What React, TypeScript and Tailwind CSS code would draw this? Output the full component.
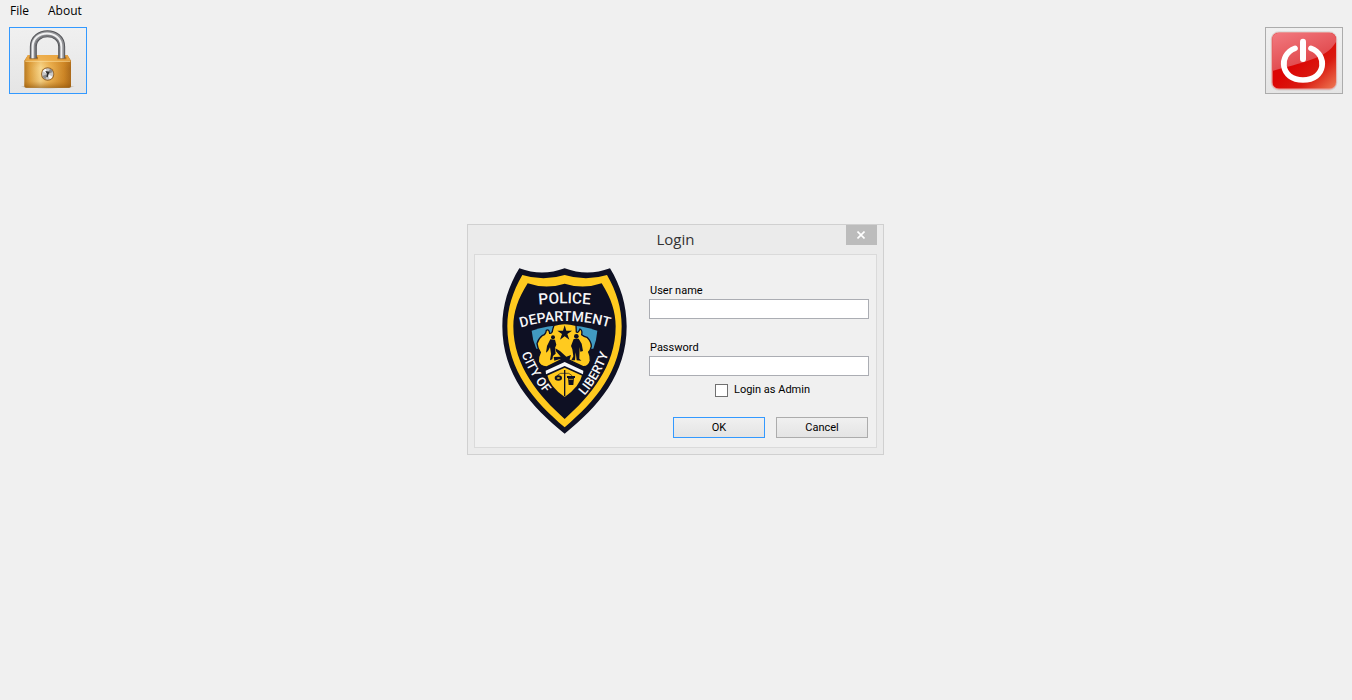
import React, { useState } from "react";

const PadlockIcon = () => (
  <svg viewBox="30 84 228 195" className="w-full h-full" aria-hidden="true">
    <defs>
      <linearGradient id="lockBody" x1="0" x2="1">
        <stop offset="0" stopColor="#b87a22" />
        <stop offset="0.12" stopColor="#dda03f" />
        <stop offset="0.35" stopColor="#f8d78c" />
        <stop offset="0.55" stopColor="#edb353" />
        <stop offset="0.85" stopColor="#cc8526" />
        <stop offset="1" stopColor="#a9681a" />
      </linearGradient>
      <linearGradient id="lockShade" x1="0" x2="0" y1="0" y2="1">
        <stop offset="0" stopColor="#d07a14" stopOpacity="0.5" />
        <stop offset="0.4" stopColor="#e0982c" stopOpacity="0" />
        <stop offset="0.8" stopColor="#b06c12" stopOpacity="0.1" />
        <stop offset="1" stopColor="#8a5008" stopOpacity="0.6" />
      </linearGradient>
      <radialGradient id="lockFloor">
        <stop offset="0.6" stopColor="#6b5a40" stopOpacity="0.8" />
        <stop offset="1" stopColor="#6b5a40" stopOpacity="0" />
      </radialGradient>
    </defs>
    <ellipse cx="143" cy="260" rx="82" ry="6" fill="url(#lockFloor)" />
    <path d="M84 165H202L213 182V258Q213 263 207 263H79Q73 263 73 258V182Z" fill="url(#lockBody)" />
    <path d="M84 165H202L213 182V258Q213 263 207 263H79Q73 263 73 258V182Z" fill="url(#lockShade)" />
    <path d="M84 165H202L212 182H74Z" fill="#efaf4c" opacity="0.75" />
    <path d="M76 184H211" stroke="#ffe2a1" strokeWidth="3" opacity="0.7" />
    <path d="M88 170H114V178H88ZM172 170H199V178H172Z" fill="#9c5c12" opacity="0.7" />
    <path d="M100 175V140C100 88 185 88 185 140V175" fill="none" stroke="#55565a" strokeWidth="21" />
    <path d="M100 175V140C100 88 185 88 185 140V175" fill="none" stroke="#929396" strokeWidth="15" />
    <path d="M98 175V140C98 87 184 87 184 140V175" fill="none" stroke="#f1f1f2" strokeWidth="6" />
    <path d="M106 175V141C106 96 179 96 179 141V175" fill="none" stroke="#6d6e72" strokeWidth="3" />
    <circle cx="143" cy="222" r="20" fill="#99672a" />
    <circle cx="143" cy="222" r="17" fill="#c8c8c8" />
    <path d="M143 222L128 214A17 17 0 0 1 137 206ZM143 222L158 230A17 17 0 0 1 149 238Z" fill="#f9f9f9" />
    <path d="M143 222L127 228A17 17 0 0 0 136 238ZM143 222L159 216A17 17 0 0 0 150 206Z" fill="#8c8c8c" />
    <path d="M136 213L149 215L146 222L143 232L139 231L141 222Z" fill="#2d2d2d" />
  </svg>
);

const PowerIcon = () => (
  <svg viewBox="42 24 228 195" className="w-full h-full" aria-hidden="true">
    <defs>
      <linearGradient id="powerBase" x1="0" y1="0" x2="1" y2="1">
        <stop offset="0.45" stopColor="#dc0404" />
        <stop offset="0.7" stopColor="#d91a10" />
        <stop offset="1" stopColor="#ee7a55" />
      </linearGradient>
      <linearGradient id="powerGloss" x1="0" y1="0" x2="0.6" y2="1">
        <stop offset="0" stopColor="#f27a80" />
        <stop offset="1" stopColor="#dd3f42" />
      </linearGradient>
      <clipPath id="powerClip">
        <rect x="61" y="38" width="191" height="168" rx="20" />
      </clipPath>
    </defs>
    <rect x="56" y="34" width="200" height="178" rx="24" fill="#cfcaca" opacity="0.6" />
    <rect x="58" y="36" width="196" height="173" rx="22" fill="#e9a5a2" />
    <g clipPath="url(#powerClip)">
      <rect x="61" y="38" width="191" height="168" fill="url(#powerBase)" />
      <path d="M61 38H252V66C222 118 145 128 61 153Z" fill="url(#powerGloss)" />
    </g>
    <path d="M129 85C78 104 84 180 153 180C222 180 228 104 177 85" fill="none" stroke="#fff" strokeWidth="17" strokeLinecap="round" />
    <path d="M153 65V117" stroke="#fff" strokeWidth="18" strokeLinecap="round" />
  </svg>
);

const PoliceBadge = () => (
  <svg viewBox="126 150 375 498" className="w-[125px] h-[166px] shrink-0" role="img" aria-label="Police badge">
    <defs>
      <path id="arcPolice" d="M215 262Q314 250 413 262" />
      <path id="arcDepartment" d="M168 333Q314 285 462 333" />
      <path id="arcCity" d="M176 376Q196 465 281 558" />
      <path id="arcLiberty" d="M352 555Q422 490 455 378" />
    </defs>
    <path
      d="M178 151Q246 176 314 151Q382 176 450 151C482 203 500 262 500 325C500 470 415 566 314 647C213 566 127 470 127 325C127 262 146 203 178 151Z"
      fill="#0e1023"
    />
    <path
      d="M187 171Q250 191 314 171Q378 191 441 171C470 222 485 270 485 325C485 459 405 551 314 628C223 551 142 459 142 325C142 270 158 222 187 171Z"
      fill="#ffca1f"
    />
    <path
      d="M203 196Q258 215 314 197Q370 215 425 196C454 242 467 282 467 325C467 445 390 535 314 603C238 535 160 445 160 325C160 282 174 242 203 196Z"
      fill="#0e1023"
    />
    <path d="M215 338Q314 306 412 338Q410 366 400 392H229Q217 366 215 338Z" fill="#419ac1" />
    <path
      d="M282 322Q314 312 348 322L349 342Q354 346 360 333Q368 337 365 350Q372 356 381 358Q394 371 394 385Q391 397 386 402Q392 414 391 428Q387 447 369 446L314 420L259 447Q239 445 235 430Q234 416 241 403Q232 389 231 377Q235 362 248 352Q257 350 259 337Q267 332 269 346Q277 347 278 335Z"
      fill="#ffca1f"
      stroke="#0e1023"
      strokeWidth="4"
    />
    <path d="M314 322L319 338H336L322 348L328 365L314 355L300 365L306 348L292 338H309Z" fill="#0e1023" />
    {/* two figures and the scene between them */}
    <g fill="#0e1023">
      <circle cx="279" cy="358" r="6" />
      <path d="M271 364L285 365L289 380L285 390L287 407L279 414L277 424L270 427L273 407L270 388L264 399L258 404L261 384Z" />
      <circle cx="349" cy="355" r="7" />
      <path d="M341 363L356 362L365 377L369 399L361 401L359 387L358 422L364 428L350 427L347 403L345 427H334L340 415L337 394L333 384Z" />
      <path d="M286 391L300 399L319 416L333 411L328 427L298 424L283 428L281 417L302 416L288 400Z" />
    </g>
    <path d="M260 466L314 440L368 466Q360 506 314 537Q268 506 260 466Z" fill="#ffca1f" />
    <path d="M252 459L314 428L376 459L370 475L314 449L258 475Z" fill="#0e1023" />
    <path d="M257 458L314 432L370 458L369 469L314 444L258 469Z" fill="#f7f7f8" />
    <path d="M314 456V535" stroke="#0e1023" strokeWidth="4" />
    <path d="M293 471L302 466H326L335 472M293 471V478M335 472V479" fill="none" stroke="#0e1023" strokeWidth="2" />
    <ellipse cx="295" cy="480" rx="8" ry="5" fill="none" stroke="#0e1023" strokeWidth="6" />
    <path d="M321 474H345V480H342L340 501H326L324 480H321Z" fill="#0e1023" />
    <path d="M326 484H340" stroke="#ffca1f" strokeWidth="2" />
    <g fill="#f7f7f8" textAnchor="middle" className="font-['Roboto',sans-serif] font-medium">
      <text fontSize="46">
        <textPath href="#arcPolice" startOffset="50%">POLICE</textPath>
      </text>
      <text fontSize="42">
        <textPath href="#arcDepartment" startOffset="50%">DEPARTMENT</textPath>
      </text>
      <text fontSize="38">
        <textPath href="#arcCity" startOffset="48%">CITY OF</textPath>
      </text>
      <text fontSize="38">
        <textPath href="#arcLiberty" startOffset="50%">LIBERTY</textPath>
      </text>
    </g>
  </svg>
);

const LoginDialog = () => {
  const [userName, setUserName] = useState("");
  const [password, setPassword] = useState("");
  const [isAdmin, setIsAdmin] = useState(false);

  const field = "block w-55 h-5 px-1 bg-white border border-[#abadb3] outline-none";
  const button = "w-23 h-[21px] pt-px border bg-linear-to-b from-[#f0f0f0] to-[#e4e4e4]";

  return (
    <div role="dialog" aria-labelledby="login-title" className="px-[6px] pb-[6px] bg-[#ebebeb] border border-[#d0d0d0]">
      <div className="flex justify-between h-[29px]">
        <div className="w-[31px]" />
        <h1 id="login-title" className="font-['Open_Sans',sans-serif] text-[15px] leading-[29px] text-[#333]">
          Login
        </h1>
        <button type="button" aria-label="Close" className="flex items-center justify-center w-[31px] h-5 bg-[#bcbcbc]">
          <svg viewBox="0 0 8 8" className="w-2 h-2" aria-hidden="true">
            <path d="M0.5 0.5L7.5 7.5M7.5 0.5L0.5 7.5" stroke="#fff" strokeWidth="1.6" />
          </svg>
        </button>
      </div>
      <div className="flex gap-[22px] pt-[13px] pl-[27px] pr-[7px] pb-[9px] bg-[#f0f0f0] border border-[#dadada]">
        <PoliceBadge />
        <form
          onSubmit={(e) => e.preventDefault()}
          className="flex flex-col pt-[13px] font-['Roboto',sans-serif] text-[11px] leading-[18px] text-black"
        >
          <label htmlFor="userName" className="pl-px pt-px -mb-px">User name</label>
          <input
            id="userName"
            type="text"
            value={userName}
            onChange={(e) => setUserName(e.target.value)}
            className={field}
          />
          <label htmlFor="password" className="pl-px pt-px -mb-px mt-[19px]">Password</label>
          <input
            id="password"
            type="password"
            value={password}
            onChange={(e) => setPassword(e.target.value)}
            className={field}
          />
          <label className="flex items-center self-start gap-[6px] mt-[5px] ml-[66px]">
            <input
              type="checkbox"
              checked={isAdmin}
              onChange={(e) => setIsAdmin(e.target.checked)}
              className="appearance-none w-[13px] h-[13px] bg-white border border-[#707070] checked:bg-[#3399ff]"
            />
            Login as Admin
          </label>
          <div className="flex justify-end gap-[11px] mt-[18px] pr-px">
            <button type="submit" className={`${button} border-[#3399ff]`}>OK</button>
            <button type="button" className={`${button} border-[#acacac]`}>Cancel</button>
          </div>
        </form>
      </div>
    </div>
  );
};

export default function App() {
  return (
    <div className="min-h-screen bg-[#f0f0f0]">
      <nav className="flex gap-[19px] h-[27px] pl-[10px] pb-[5px] font-['Open_Sans',sans-serif] text-[12px] text-black">
        <button type="button">File</button>
        <button type="button">About</button>
      </nav>
      <div className="flex justify-between px-[9px]">
        <button type="button" aria-label="Lock" className="w-[78px] h-[67px] border border-[#3399ff] bg-linear-to-b from-[#f0f0f0] to-[#e5e5e5]">
          <PadlockIcon />
        </button>
        <button type="button" aria-label="Exit" className="w-[78px] h-[67px] border border-[#acacac] bg-linear-to-b from-[#f0f0f0] to-[#e5e5e5]">
          <PowerIcon />
        </button>
      </div>
      <div className="fixed inset-0 flex items-center justify-center pb-[21px] pr-px">
        <LoginDialog />
      </div>
    </div>
  );
}
